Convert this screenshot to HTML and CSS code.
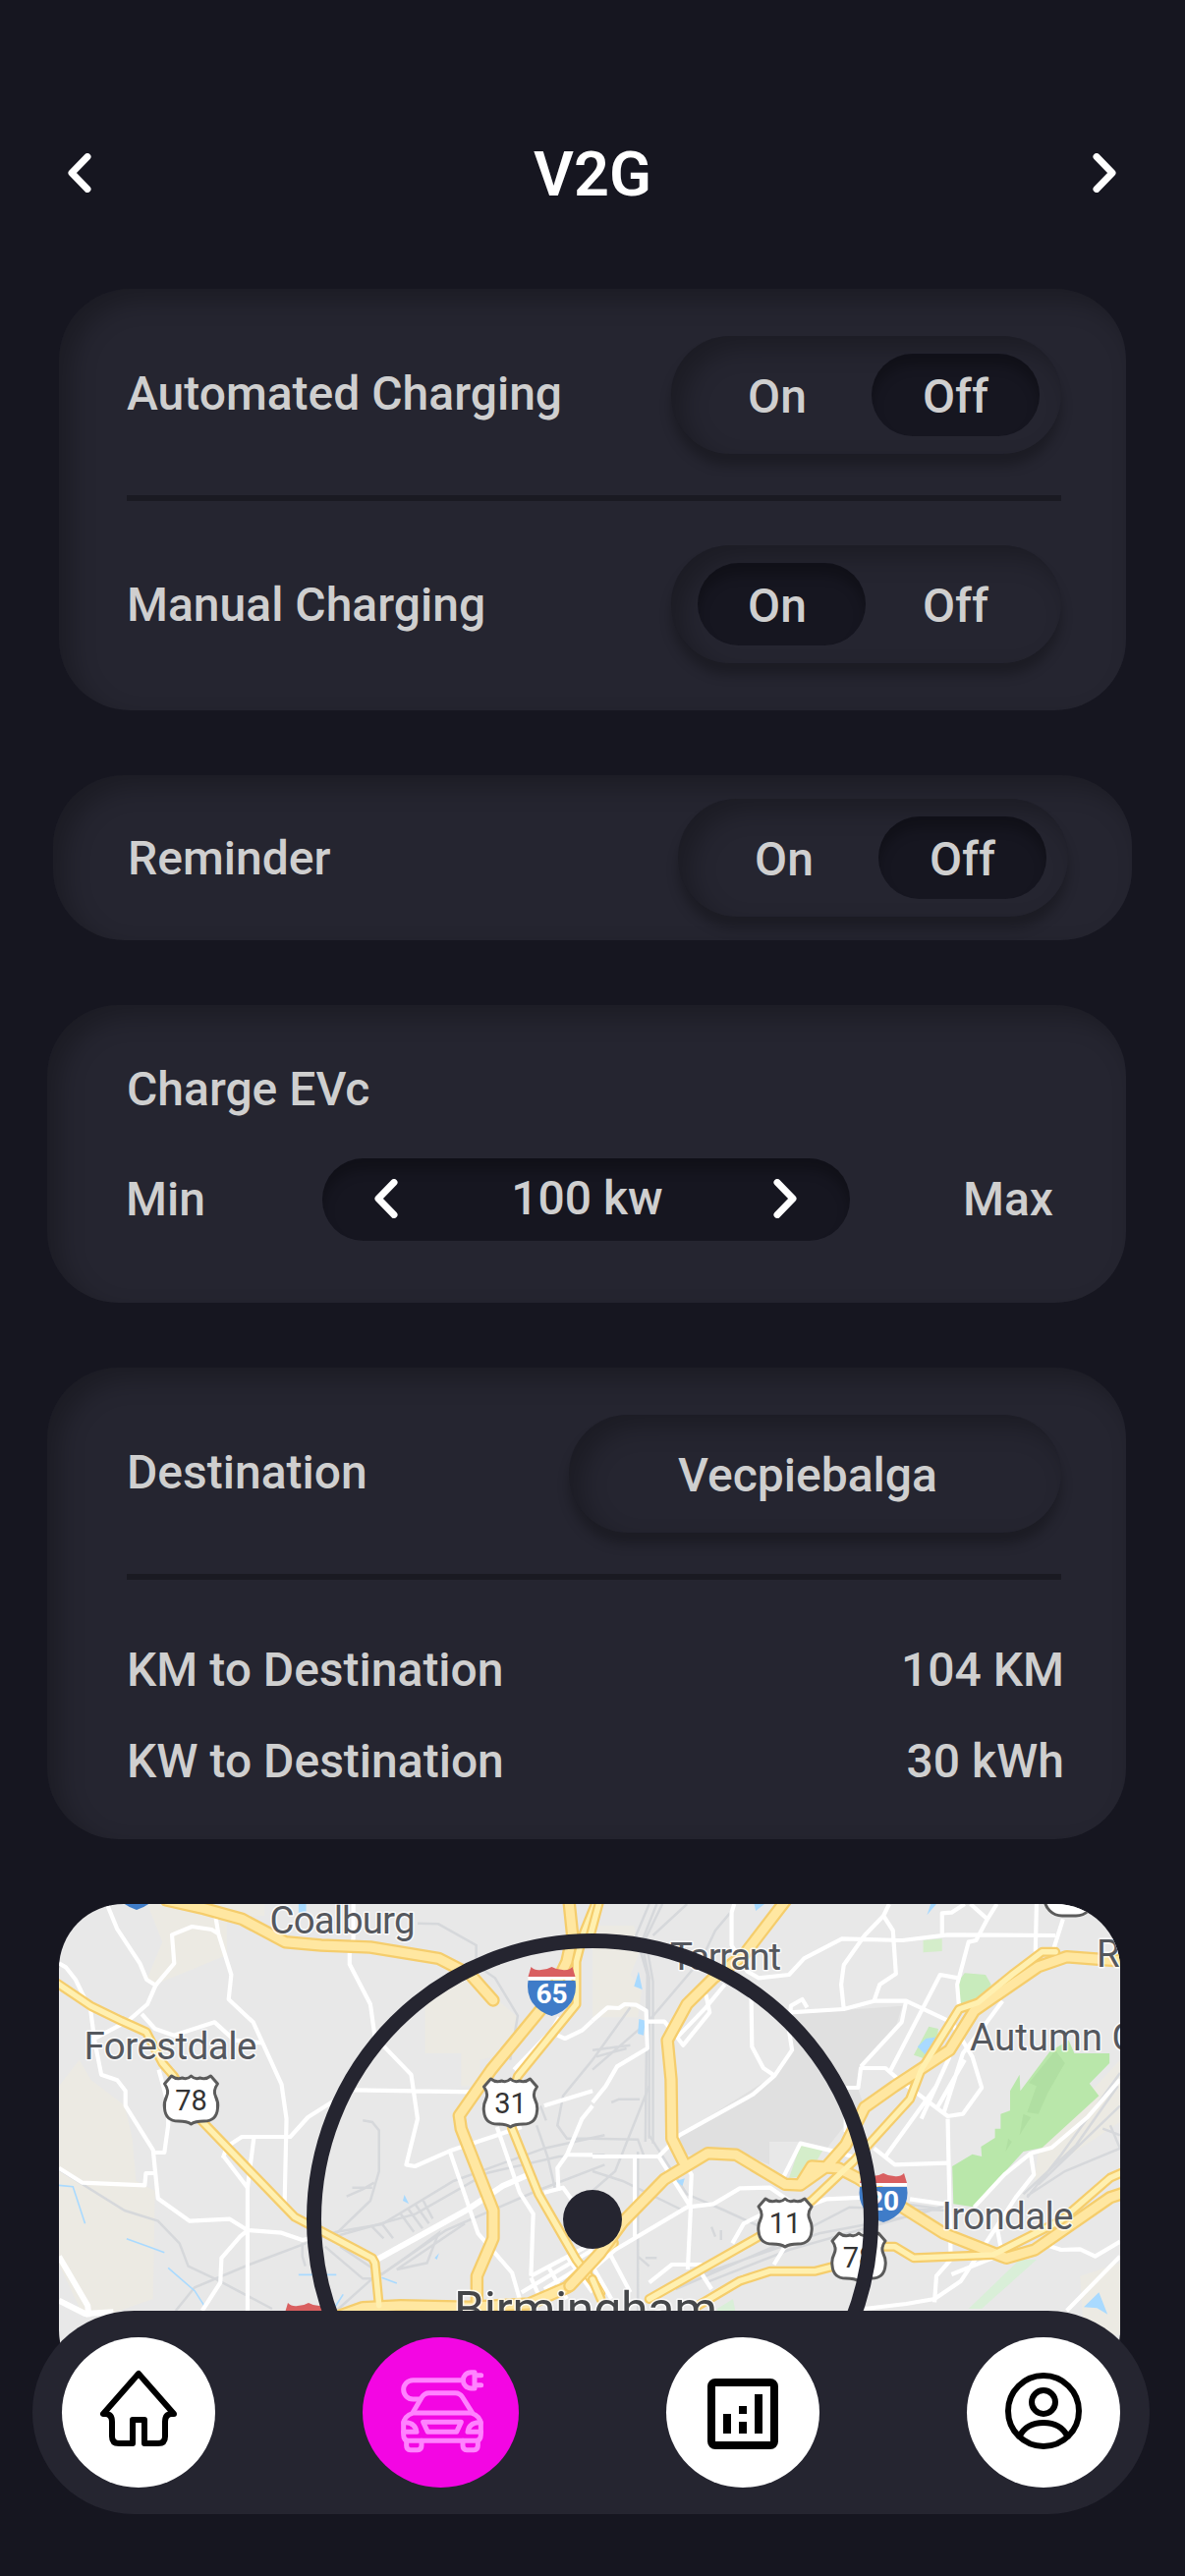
FILE: index.html
```html
<!DOCTYPE html>
<html lang="en">
<head>
<meta charset="utf-8">
<title>V2G</title>
<link rel="stylesheet" href="styles.css">
</head>
<body>
<div class="screen">
  <header class="topbar">
    <svg class="chev" viewBox="0 0 24 40"><path d="M20 3.500 4 20 20 36.500"/></svg>
    <h1>V2G</h1>
    <svg class="chev" viewBox="0 0 24 40"><path d="M4 3.500 20 20 4 36.500"/></svg>
  </header>

  <section class="card charging">
    <div class="row auto"><span class="raised">Automated Charging</span>
      <div class="toggle"><span>On</span><span class="on">Off</span></div></div>
    <hr>
    <div class="row manual"><span class="label">Manual Charging</span>
      <div class="toggle"><span class="on">On</span><span>Off</span></div></div>
  </section>

  <section class="card reminder">
    <div class="row"><span class="label">Reminder</span>
      <div class="toggle"><span>On</span><span class="on">Off</span></div></div>
  </section>

  <section class="card evc">
    <div class="evc-title">Charge EVc</div>
    <div class="evc-row">
      <span>Min</span>
      <div class="stepper">
        <svg class="chev" viewBox="0 0 24 40"><path d="M20 3.500 4 20 20 36.500"/></svg>
        <span>100 kw</span>
        <svg class="chev" viewBox="0 0 24 40"><path d="M4 3.500 20 20 4 36.500"/></svg>
      </div>
      <span>Max</span>
    </div>
  </section>

  <section class="card dest">
    <div class="row"><span class="raised">Destination</span><div class="place">Vecpiebalga</div></div>
    <hr>
    <div class="stat first"><span>KM to Destination</span><span>104 KM</span></div>
    <div class="stat"><span>KW to Destination</span><span>30 kWh</span></div>
  </section>

  <section class="map">
    <svg viewBox="0 0 1080 500" width="1080" height="500">
      <defs>
        <g id="us"><path class="us" d="M9 2Q14 6 20 4Q25 6 29 2Q33 6 38 4Q44 6 49 2L56 10Q51 17 54 23Q57 29 56 35Q55 48 42 48Q33 48 29 51Q25 48 16 48Q3 48 2 35Q1 29 4 23Q7 17 2 10Z"/></g>
        <g id="inter"><path fill="#3f7cc8" d="M1 14H49Q51 26 45 36Q38 46 25 50Q12 46 5 36Q-1 26 1 14Z"/><path fill="#d95f60" d="M4 0Q8 4 14 3Q20 3 25 0Q30 3 36 3Q42 4 46 0L49 10H1Z"/><path fill="#fff" d="M1 10H49V13H1Z"/></g>
      </defs>
      <rect width="1080" height="500" fill="#e8e8e8"/>

      <!-- west half -->
      <g class="tile" transform="translate(-60 -28) scale(.384615 .333333)">
        <g class="sand">
          <path d="M390 84H700V120H600V240L410 330L390 310L430 200Z"/>
          <path d="M1125 340L1220 280L1370 430L1350 540L1270 560V640H1220V540H1125Z"/>
          <path d="M156 640L210 560L240 620L330 700L350 800L360 930L410 960L405 1290L280 1340H220L150 1170Z"/>
        </g>
        <g class="rail">
          <path d="M156 895L330 1020L418 1052L475 1120L498 1190L575 1232L720 1320"/>
          <path d="M465 1326L515 1255L660 1185L890 1085L1010 1062L1200 930L1440 830L1600 790"/>
          <path d="M890 1098L1100 1030L1290 905L1480 855L1600 850M900 1130L1010 1215L1180 1080L1420 960L1600 880"/>
          <path d="M960 745L985 750L1003 775V900L980 990L890 1090M917 977L960 955L990 935M932 950H985"/>
          <path d="M1105 143L1160 145L1260 210V270L1310 310L1370 425L1350 560M800 1120V1160L808 1190M860 1130L960 1228H985L890 1326"/>
          <path d="M1060 1030L1095 1085M1080 1015L1118 1075M1100 1003L1135 1060M1120 990L1145 1045M985 1070L1015 1105M1010 1060L1040 1105"/>
          <path d="M1010 1215L1090 1150L1160 1090L1130 1180L1050 1200L1230 1060M1568 560L1490 670L1475 760L1500 800H1568M1420 760L1450 860L1470 960M1430 700L1445 745"/>
        </g>
        <g class="water"><path d="M156 943L193 947L225 1060M335 1106L435 1148M445 1195L515 1265L540 1310M790 1216H890M1010 1225L1050 1242M880 1326L908 1276"/><path fill="#a9daff" d="M790 84H810V110H790ZM1070 972L1082 1000L1066 990ZM1150 1165L1162 1150L1156 1170Z"/></g>
        <g class="street">
          <path d="M285 90L310 160L370 265L388 315L412 332L390 390L340 440L242 500M156 265L175 278L200 315L240 410L250 500L268 605L310 622L332 655V700L405 835L418 983L502 1052L608 1046L655 1080L745 1088L800 1110L840 1100"/>
          <path d="M412 332L461 265L455 178L508 153L560 162L578 175L570 120M578 175L612 300L605 375L670 445L745 635L758 740L753 1000M375 420L410 465L460 485L568 445L620 500L695 508"/>
          <path d="M420 590L432 640L445 700V760L435 843H405M156 890L218 935L383 943L386 906H410M590 860L600 825L640 795H768L815 735L890 680M672 795L655 950V1326M592 855L655 950M655 1080L635 1100L586 1165L583 1240L535 1326"/>
          <path d="M935 84V190L925 235V268L980 390L992 490L1088 605L1105 740L1075 880L1098 885L1190 838L1380 765M935 652L1260 658M1440 700L1568 655M1190 838L1265 1090L1355 1210L1375 1290M1315 765L1375 965L1411 1030L1405 1220"/>
          <path class="wide" d="M1000 1168L1240 1015L1330 945L1400 910"/>
          <path d="M1480 430L1460 470L1360 590M1475 485L1495 495L1540 470L1568 440M1568 700L1540 740L1500 850L1475 890L1478 960M1500 850H1568M1440 965L1490 950L1515 990M1405 1220L1568 1120M1380 1270L1568 1140M1440 1260L1568 1170M1405 1225L1430 1290M1450 1190L1500 1290M1500 1160L1568 1270"/>
          <path class="wide" d="M156 1160L232 1310L235 1345M156 1295L225 1335L300 1330"/>
        </g>
        <g class="main">
          <path class="e" d="M440 72L540 98L640 130L755 200L850 210L980 216L1160 250L1245 300L1305 378"/>
          <path class="e" d="M1505 70L1515 180L1500 260L1450 380L1300 590L1215 730L1220 770L1305 1020V1105L1262 1220V1315"/>
          <path class="e" d="M890 1345L960 1316L1060 1310L1240 1315L1400 1305L1500 1255L1620 1120"/>
          <path class="m" d="M1580 70L1545 170L1525 260V390L1370 610L1345 700L1355 770L1425 970L1525 1170L1590 1270"/>
          <path class="m" d="M150 325L240 395L320 440L387 475L430 570L460 610L520 730L780 1040L985 1165L992 1180L1003 1310"/>
          <path class="i" d="M440 72L540 98L640 130L755 200L850 210L980 216L1160 250L1245 300L1305 378M1505 70L1515 180L1500 260L1450 380L1300 590L1215 730L1220 770L1305 1020V1105L1262 1220V1315M890 1345L960 1316L1060 1310L1240 1315L1400 1305L1500 1255L1620 1120"/>
          <path class="n" d="M1580 70L1545 170L1525 260V390L1370 610L1345 700L1355 770L1425 970L1525 1170L1590 1270M150 325L240 395L320 440L387 475L430 570L460 610L520 730L780 1040L985 1165L992 1180L1003 1310"/>
        </g>
      </g>

      <!-- east half -->
      <g class="tile" transform="translate(543 -28) scale(.384615 .333333)">
        <path fill="#e0e0e0" d="M530 412L660 408L820 395L805 450L715 580L700 640L715 690L620 830L550 810H468V880L400 850H235L230 790L480 608L528 520Z"/>
        <g class="sand"><path d="M0 150H110L125 230L100 300L130 350L120 430H0ZM1180 830L1396 560V750L1250 860L1170 930ZM1290 1220L1396 1180V1400H1300Z"/></g>
        <g class="park">
          <path fill="#d4edca" d="M875 195L925 190V228L875 232ZM550 820L610 835L570 915L520 920Z"/>
          <path fill="#c8ebbc" d="M985 295L1040 300L1055 330L1010 400L970 385L968 320ZM890 458L915 465L910 520L875 555L850 545Z"/>
          <path d="M1260 500L1275 540H1368V570L1315 632L1340 670L1190 828L1140 840L1085 910L1045 968L1015 1010L955 1000L952 885L1005 848L1030 855L1028 825L1065 798V770H1080V725L1105 715V655L1130 605L1132 655L1210 535Z"/>
          <path d="M330 1320L372 1290L380 1340H330ZM995 1320L1130 1170H1175L1030 1320Z" fill="#d9efd8"/>
        </g>
        <path fill="#a9d99a" opacity=".55" d="M1225 530L1250 570L1205 660L1180 725L1150 720L1175 640L1155 630ZM1140 725L1160 735L1130 790ZM1100 800L1110 810L1093 840Z"/>
        <g class="rail">
          <path d="M170 84L130 200L150 310V800M150 84L115 180L145 300L140 810M185 84L140 190L160 320V815M250 84L160 180"/>
          <path d="M365 110L325 165L290 250L150 440L0 590M100 400L0 560M0 530L100 515M10 550L90 525M0 800L120 803L135 850M50 690L70 680H125M150 790L250 970L350 1020L520 1110M0 900L80 930L240 1020"/>
          <path d="M120 840V1326M150 640L60 900L0 960M250 1230L600 1090L850 1035L950 1000M300 1240L520 1140L920 1010M220 1260L480 1130L680 1010L950 1020M700 980L920 1015M315 1070L325 1100M340 1080V1110M140 1165H170M150 1190L120 1160"/>
          <path d="M1396 600L1240 850L1150 980M1390 640L1280 820L1140 970M1396 700L1180 940M1350 770L1396 790M1370 760L1396 830L1250 900L1150 975"/>
        </g>
        <g class="water"><path fill="#a9daff" d="M122 290L132 345L110 335ZM123 435L140 440L135 485L120 480ZM860 520L882 495L912 490L890 555ZM885 118L895 84H910ZM428 84H455L432 105ZM1340 1270L1363 1337L1335 1318L1300 1315ZM220 930L244 922L238 945Z"/></g>
        <g class="street">
          <path d="M375 84L368 110V210L410 290L440 310L520 300L560 250L660 190L820 195L940 178L1225 180M785 84L770 120L720 180L665 270L658 330L665 405M770 120L795 165L803 297L760 330L745 380M520 415L665 405L745 380H830L950 445L1005 550L1030 645L980 725L940 732L810 620L775 585H710L703 645H670"/>
          <path d="M925 178V112L950 110L985 84M1000 84L1045 130L1015 195L995 200L965 330L970 400M1070 84L1045 130M1175 84L1172 230M1245 130L1215 240M968 310L920 300L785 600M830 380L818 445L710 580M568 400L555 375L525 395L520 470L528 530L482 608L425 665L230 790L175 855L0 855"/>
          <path d="M420 370L422 520L452 585L482 608M0 440L40 400L70 402L85 390L115 392L142 410L145 525L65 580L35 640L0 690M145 443H190L210 470L240 515L310 415L300 360M350 330L300 400L225 490M940 740L948 1170L910 1220L905 1300"/>
          <path d="M1396 620L1310 735L1215 828L1160 845L1090 910L1010 1010M1160 850L1168 910L1120 980L975 1235L905 1290L830 1305L720 1320M1070 1070L1080 1130M950 1215L1070 1160M1200 1125L1240 1140L1290 1138L1330 1160L1396 1115M1396 1160L1255 1326"/>
          <path d="M940 875L800 880L745 830M910 640L775 855M985 560L910 710M945 550L870 740M1085 380L1040 450L980 540L930 720M670 700V780M720 980L620 985L560 1010M930 1000L840 985M370 1120L400 1060L520 990L470 950L390 952L320 1000L250 1010L60 1140L0 1200"/>
          <path d="M112 860V1100M175 855L260 1010L252 1200M230 850L262 910L258 1010M500 930L550 815L660 845L700 860M45 1150L100 1270M0 1190L50 1290M150 1240L210 1185H290M290 1215L315 1260M480 1185L520 1110M400 1220L370 1260"/>
        </g>
        <g class="main">
          <path class="e" d="M520 60L400 240L320 310L250 390L198 500L208 620L210 800L240 870"/>
          <path class="e" d="M-60 1250L20 1150L80 1055L190 925L305 845L380 850L510 940L550 942L620 885L670 820L720 705L800 640L945 530L1010 410L1180 275L1255 245L1400 258"/>
          <path class="e" d="M550 940L580 885L650 890L700 920L820 1010L930 1090L1095 1165L1170 1140L1370 980L1410 965"/>
          <path class="m" d="M150 1290L440 1100L580 990L690 870L840 680L870 590L970 405L1020 385L1110 300L1190 230H1225"/>
          <path class="m" d="M280 1310L390 1235L470 1205H590L640 1190M770 1130H800L850 1165L1060 1155L1240 1050L1370 920L1410 900"/>
          <path class="m" d="M20 70L-8 190M0 1230L22 1290"/>
          <path class="i" d="M520 60L400 240L320 310L250 390L198 500L208 620L210 800L240 870M-60 1250L20 1150L80 1055L190 925L305 845L380 850L510 940L550 942L620 885L670 820L720 705L800 640L945 530L1010 410L1180 275L1255 245L1400 258M550 940L580 885L650 890L700 920L820 1010L930 1090L1095 1165L1170 1140L1370 980L1410 965"/>
          <path class="n" d="M150 1290L440 1100L580 990L690 870L840 680L870 590L970 405L1020 385L1110 300L1190 230H1225M280 1310L390 1235L470 1205H590L640 1190M770 1130H800L850 1165L1060 1155L1240 1050L1370 920L1410 900M20 70L-8 190M0 1230L22 1290"/>
        </g>
      </g>

      <use href="#inter" x="476.5" y="64"/><use href="#inter" x="814" y="274"/><use href="#inter" x="229" y="406"/><use href="#inter" x="54" y="-44"/>
      <use href="#us" x="105.5" y="173"/><use href="#us" x="430.5" y="176"/><use href="#us" x="710" y="298"/><use href="#us" x="785" y="333"/>
      <rect x="1003" y="-30" width="50" height="42" rx="18" fill="#fff" stroke="#5b5b5b" stroke-width="3"/>
      <g class="num">
        <text x="134.500" y="210">78</text><text x="459.500" y="213">31</text><text x="739" y="334.500">11</text><text x="814" y="370">78</text>
        <text class="w" x="501.500" y="100.500">65</text><text class="w" x="839" y="311.500">20</text>
      </g>
      <g class="town">
        <text x="214.500" y="30" textLength="148">Coalburg</text>
        <text x="25.500" y="158" textLength="176">Forestdale</text>
        <text x="622" y="66.500" textLength="113">Tarrant</text>
        <text x="1056" y="64">R</text>
        <text x="927" y="149">Autumn C</text>
        <text x="898.500" y="331" textLength="134">Irondale</text>
        <text class="city" x="402" y="430" textLength="268">Birmingham</text>
      </g>
      <circle cx="543" cy="321" r="283.500" fill="none" stroke="#252530" stroke-width="15"/>
      <circle cx="543" cy="321" r="30" fill="#252530"/>
    </svg>
  </section>

  <nav class="nav">
    <a class="tab"><svg viewBox="0 0 156 153"><path class="ln" d="M78 37 42 78H44Q51 78 51 86V101Q51 108 58 108H72V84H84V108H98Q105 108 105 101V86Q105 78 112 78H114Z"/></svg></a>
    <a class="tab active"><svg viewBox="27 27 477 459"><g class="car">
      <path d="M330 158H181a29 29 0 0 0 0 58H203M369 134H358A24 24.500 0 0 0 358 183H369ZM376 143H389M376 173H389"/>
      <path d="M181 256 208 210Q216 197 230 197H310Q324 197 332 210L361 256"/>
      <path d="M182 258H358Q388 268 388 292V325Q388 343 372 343H168Q152 343 152 325V292Q152 268 182 258Z"/>
      <path d="M152 287H158Q188 288 192 316H152M388 287H382Q352 288 348 316H388M212 286H328L314 316H226Z"/>
      <path d="M161 343V358Q161 371 173 371H195Q207 371 207 358V343M379 343V358Q379 371 367 371H345Q333 371 333 358V343"/>
    </g></svg></a>
    <a class="tab"><svg viewBox="0 0 156 153"><rect x="46" y="46" width="64" height="64" rx="4" fill="none" stroke="#000" stroke-width="8"/><path d="M58 78h8v20h-8zM74 70h8v8h-8zM74 86h8v12h-8zM90 58h8v40h-8z"/></svg></a>
    <a class="tab"><svg viewBox="0 0 156 153"><circle class="ln" cx="78" cy="75" r="36"/><circle class="ln" cx="78" cy="66" r="12"/><path class="ln" d="M53.500 101C58 92 67 87 78 87S98 92 102.500 101"/></svg></a>
  </nav>
</div>
</body>
</html>
```
FILE: styles.css
```css
* { box-sizing: border-box; }
body {
  margin: 0;
  background: #161620;
  font-family: Roboto, "Liberation Sans", sans-serif;
  font-size: 48px;
  font-weight: 500;
  line-height: 56px;
  color: #cfcfcf;
}
.screen {
  width: 1206px;
  height: 2622px;
  padding: 136px 0 0;
  overflow: hidden;
  display: flex;
  flex-direction: column;
}
.topbar {
  height: 80px;
  padding: 0 70px 0 69px;
  display: flex;
  align-items: center;
  justify-content: space-between;
}
.topbar h1 {
  margin: 0;
  padding: 3px 0 0 1px;
  font-size: 63px;
  font-weight: 600;
  color: #fff;
}
.chev { width: 24px; height: 40px; flex: none; }
.chev path {
  fill: none;
  stroke: #fff;
  stroke-width: 7;
  stroke-linecap: round;
  stroke-linejoin: round;
}
.card {
  background: #252530;
  border-radius: 72px;
  box-shadow: inset 12px 12px 24px rgba(0, 0, 0, .25);
  flex: none;
}
.row {
  display: flex;
  align-items: center;
  justify-content: space-between;
}
.raised { margin-top: -2px; }
.label { padding-top: 2px; }
hr {
  border: 0;
  margin: 0;
  height: 6px;
  background: #1a1a22;
}
.charging {
  margin: 78px 60px 0;
  height: 429px;
  padding: 48px 66px 0 69px;
}
.charging hr { margin-top: 42px; }
.manual { margin-top: 45px; }
.toggle {
  width: 397px;
  height: 120px;
  padding: 18px 22px 18px 27px;
  border-radius: 60px;
  background: #252530;
  box-shadow: inset 12px 12px 24px rgba(0, 0, 0, .25), 0 12px 12px rgba(0, 0, 0, .25);
  display: flex;
  justify-content: space-between;
}
.toggle span {
  width: 171px;
  height: 84px;
  line-height: 87px;
  border-radius: 42px;
  text-align: center;
}
.toggle span:first-child { padding-right: 9px; }
.toggle .on {
  background: #161620;
  box-shadow: inset 0 12px 12px rgba(0, 0, 0, .25);
}
.reminder {
  margin: 66px 54px 0;
  height: 168px;
  padding: 24px 65px 0 76px;
}
.evc {
  margin: 66px 60px 0 48px;
  height: 303px;
  padding: 58px 74px 0 80px;
}
.evc-title { padding-left: 1px; }
.evc-row {
  margin-top: 42px;
  display: flex;
  align-items: center;
  justify-content: space-between;
}
.evc-row > span { margin-top: -1px; }
.stepper {
  position: relative;
  left: 2px;
  width: 537px;
  height: 84px;
  padding: 0 54px 2px 53px;
  border-radius: 42px;
  background: #161620;
  box-shadow: inset 0 12px 12px rgba(0, 0, 0, .25);
  display: flex;
  align-items: center;
  justify-content: space-between;
}
.stepper span { padding-left: 3px; }
.dest {
  margin: 66px 60px 0 48px;
  height: 480px;
  padding: 48px 66px 0 81px;
}
.dest hr { margin-top: 42px; }
.place {
  width: 501px;
  height: 120px;
  line-height: 123px;
  padding-right: 15px;
  border-radius: 60px;
  background: #252530;
  text-align: center;
  box-shadow: inset 12px 12px 24px rgba(0, 0, 0, .25), 0 12px 12px rgba(0, 0, 0, .25);
}
.stat {
  margin: 37px -3px 0 0;
  display: flex;
  justify-content: space-between;
}
.stat.first { margin-top: 64px; }
.map {
  margin: 66px 66px 0 60px;
  height: 500px;
  border-radius: 66px;
  overflow: hidden;
  flex: none;
}
.map svg { display: block; }
.tile path { vector-effect: non-scaling-stroke; }
.sand path { fill: #eceae3; }
.park path:not([fill]) { fill: #b9e7aa; }
.rail path { fill: none; stroke: #d6d8db; stroke-width: 2.500; }
.water path:not([fill]) { fill: none; stroke: #a9daff; stroke-width: 1.600; }
.street path { fill: none; stroke: #fff; stroke-width: 4.200; stroke-linejoin: round; }
.street .wide { stroke-width: 6; }
.main path { fill: none; stroke-linejoin: round; stroke-linecap: round; }
.main .e { stroke: #f5cd6c; stroke-width: 13.500; }
.main .i { stroke: #ffe7a1; stroke-width: 9; }
.main .m { stroke: #f5cd6c; stroke-width: 10; }
.main .n { stroke: #fff0b0; stroke-width: 5.500; }
.us { fill: #fff; stroke: #5b5b5b; stroke-width: 3; stroke-linejoin: round; }
.num text { font-size: 29px; font-weight: 400; text-anchor: middle; fill: #333; }
.num .w { fill: #fff; font-weight: 700; font-size: 28px; }
.town text {
  font-size: 38.500px;
  font-weight: 400;
  fill: #55585e;
  stroke: rgba(255, 255, 255, .8);
  stroke-width: 3;
  stroke-linejoin: round;
  paint-order: stroke;
}
.town .city { font-size: 50px; fill: #444649; }
.nav {
  position: relative;
  margin: -86px 36px 0 33px;
  height: 207px;
  padding: 0 30px;
  border-radius: 104px;
  background: #252530;
  display: flex;
  align-items: center;
  justify-content: space-between;
  flex: none;
}
.tab {
  width: 156px;
  height: 153px;
  border-radius: 50%;
  background: #fff;
}
.tab svg { display: block; width: 100%; height: 100%; }
.tab.active { width: 159px; background: #f306e3; }
.ln { fill: none; stroke: #000; stroke-width: 6; stroke-linejoin: round; stroke-linecap: round; }
.car path { fill: none; stroke: #ff83ff; stroke-width: 15; stroke-linejoin: round; stroke-linecap: round; }
```
